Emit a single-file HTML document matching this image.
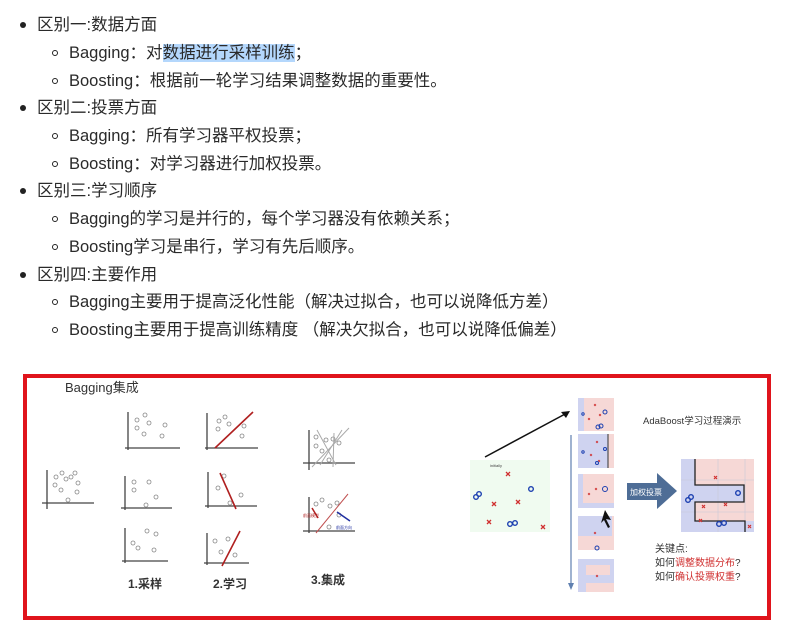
<!DOCTYPE html>
<html><head><meta charset="utf-8"><style>
html,body{margin:0;padding:0;background:#fff;width:790px;height:630px;overflow:hidden;position:relative}
.t{position:absolute;font-family:"Liberation Sans","Noto Sans CJK SC",sans-serif;font-size:16.5px;color:#2a2a2a;white-space:nowrap;line-height:20px}
.b1{position:absolute;width:6px;height:6px;border-radius:50%;background:#222}
.b2{position:absolute;border-radius:50%;border:1px solid #222;box-sizing:border-box;width:6px;height:6px}
.hl{background:#b4d7fc}
svg{position:absolute;left:0;top:0}
svg text{font-family:"Liberation Sans","Noto Sans CJK SC",sans-serif}
</style></head><body>
<div class="b1" style="left:20px;top:22px"></div><div class="t" style="left:37px;top:15px">区别一:数据方面</div>
<div class="b2" style="left:52px;top:50px"></div><div class="t" style="left:69px;top:43px">Bagging：对<span class="hl">数据进行采样训练</span>；</div>
<div class="b2" style="left:52px;top:78px"></div><div class="t" style="left:69px;top:71px">Boosting：根据前一轮学习结果调整数据的重要性。</div>
<div class="b1" style="left:20px;top:105px"></div><div class="t" style="left:37px;top:98px">区别二:投票方面</div>
<div class="b2" style="left:52px;top:133px"></div><div class="t" style="left:69px;top:126px">Bagging：所有学习器平权投票；</div>
<div class="b2" style="left:52px;top:161px"></div><div class="t" style="left:69px;top:154px">Boosting：对学习器进行加权投票。</div>
<div class="b1" style="left:20px;top:188px"></div><div class="t" style="left:37px;top:181px">区别三:学习顺序</div>
<div class="b2" style="left:52px;top:216px"></div><div class="t" style="left:69px;top:209px">Bagging的学习是并行的，每个学习器没有依赖关系；</div>
<div class="b2" style="left:52px;top:244px"></div><div class="t" style="left:69px;top:237px">Boosting学习是串行，学习有先后顺序。</div>
<div class="b1" style="left:20px;top:272px"></div><div class="t" style="left:37px;top:265px">区别四:主要作用</div>
<div class="b2" style="left:52px;top:299px"></div><div class="t" style="left:69px;top:292px">Bagging主要用于提高泛化性能（解决过拟合，也可以说降低方差）</div>
<div class="b2" style="left:52px;top:327px"></div><div class="t" style="left:69px;top:320px">Boosting主要用于提高训练精度 （解决欠拟合，也可以说降低偏差）</div>

<svg width="790" height="630" viewBox="0 0 790 630">
<rect x="25" y="376" width="744" height="242" fill="#fff" stroke="#e0141c" stroke-width="4"/>
<text x="65" y="392" font-size="13" fill="#333">Bagging集成</text>
<g stroke="#444" stroke-width="1.3" fill="none">
<path d="M47 470V509M42 503H94"/>
<path d="M128 412V450M125 448H180"/>
<path d="M125 476V510M121 508H172"/>
<path d="M125 528V563M122 561H168"/>
<path d="M207 413V450M205 448H258"/>
<path d="M208 472V508M205 506H257"/>
<path d="M207 533V565M204 563H249"/>
<path d="M309 430V470M303 463H355"/>
<path d="M309 497V533M303 531H355"/>
</g>
<g stroke="#888" stroke-width="0.8" fill="none">
<circle cx="56" cy="477" r="2"/><circle cx="62" cy="473" r="2"/><circle cx="66" cy="479" r="2"/><circle cx="71" cy="477" r="2"/><circle cx="75" cy="473" r="2"/><circle cx="55" cy="485" r="2"/><circle cx="61" cy="490" r="2"/><circle cx="78" cy="483" r="2"/><circle cx="77" cy="492" r="2"/><circle cx="68" cy="500" r="2"/>
<circle cx="137" cy="420" r="2"/><circle cx="145" cy="415" r="2"/><circle cx="149" cy="423" r="2"/><circle cx="137" cy="428" r="2"/><circle cx="165" cy="425" r="2"/><circle cx="144" cy="434" r="2"/><circle cx="162" cy="436" r="2"/>
<circle cx="134" cy="482" r="2"/><circle cx="149" cy="482" r="2"/><circle cx="134" cy="490" r="2"/><circle cx="156" cy="497" r="2"/><circle cx="146" cy="505" r="2"/>
<circle cx="133" cy="543" r="2"/><circle cx="147" cy="531" r="2"/><circle cx="156" cy="534" r="2"/><circle cx="138" cy="548" r="2"/><circle cx="154" cy="550" r="2"/>
<circle cx="219" cy="421" r="2"/><circle cx="225" cy="417" r="2"/><circle cx="229" cy="424" r="2"/><circle cx="218" cy="429" r="2"/><circle cx="244" cy="426" r="2"/><circle cx="242" cy="436" r="2"/>
<circle cx="218" cy="488" r="2"/><circle cx="224" cy="476" r="2"/><circle cx="241" cy="495" r="2"/><circle cx="230" cy="503" r="2"/>
<circle cx="215" cy="541" r="2"/><circle cx="221" cy="552" r="2"/><circle cx="228" cy="539" r="2"/><circle cx="235" cy="555" r="2"/>
<circle cx="316" cy="437" r="2"/><circle cx="316" cy="446" r="2"/><circle cx="322" cy="451" r="2"/><circle cx="326" cy="440" r="2"/><circle cx="333" cy="439" r="2"/><circle cx="339" cy="443" r="2"/><circle cx="329" cy="460" r="2"/>
<circle cx="316" cy="504" r="2"/><circle cx="322" cy="500" r="2"/><circle cx="330" cy="506" r="2"/><circle cx="337" cy="503" r="2"/><circle cx="339" cy="515" r="2"/><circle cx="329" cy="527" r="2"/>
</g>
<g stroke="#b02020" stroke-width="1.6"><path d="M215 448L253 412M220 473L236 509M222 566L240 531"/></g>
<path d="M316 533L348 494" stroke="#c05050" stroke-width="1"/>
<g stroke="#aaa" stroke-width="1"><path d="M317 430L336 465M312 467L349 428M320 465L342 430M334 433L333 467"/></g>
<path d="M318 518L312 508" stroke="#b02020" stroke-width="1.5"/><path d="M337 512L350 521" stroke="#2030a0" stroke-width="1.5"/>
<text x="303" y="517" font-size="4" fill="#b02020">前面模型</text><text x="336" y="529" font-size="4" fill="#2030a0">前面方向</text>
<text x="128" y="588" font-size="12" font-weight="bold" fill="#333">1.采样</text>
<text x="213" y="588" font-size="12" font-weight="bold" fill="#333">2.学习</text>
<text x="311" y="584" font-size="12" font-weight="bold" fill="#333">3.集成</text>

<rect x="470" y="460" width="80" height="72" fill="#f0fbf0"/>
<text x="490" y="467" font-size="4" fill="#444">initially</text>
<path d="M485 457L567 413" stroke="#111" stroke-width="1.5"/><path d="M570 411L561 412L566 418Z" fill="#111"/>
<g stroke="#d03030" stroke-width="1.3"><path d="M506 472l4 4m0-4l-4 4M492 502l4 4m0-4l-4 4M516 500l4 4m0-4l-4 4M487 520l4 4m0-4l-4 4M541 525l4 4m0-4l-4 4"/></g>
<g stroke="#1b3fb0" stroke-width="1.4" fill="none"><circle cx="476" cy="497" r="2.3"/><circle cx="479" cy="494" r="2.3"/><circle cx="531" cy="489" r="2.3"/><circle cx="510" cy="524" r="2.3"/><circle cx="515" cy="523" r="2.3"/></g>
<path d="M571 435V585" stroke="#6080b0" stroke-width="1.2"/><path d="M568 583L571 590L574 583Z" fill="#6080b0"/>
<g>
<rect x="578" y="398" width="36" height="33" fill="#f6d8d6"/><rect x="578" y="398" width="6" height="33" fill="#cfd3f0"/>
<rect x="578" y="434" width="36" height="34" fill="#cfd3f0"/><rect x="608" y="434" width="6" height="34" fill="#f6d8d6"/><path d="M608 434V468" stroke="#333"/>
<rect x="578" y="474" width="36" height="34" fill="#f6d8d6"/><rect x="578" y="474" width="5" height="34" fill="#cfd3f0"/><rect x="578" y="503" width="36" height="5" fill="#cfd3f0"/>
<rect x="578" y="516" width="36" height="34" fill="#f6d8d6"/><rect x="578" y="516" width="34" height="20" fill="#cfd3f0"/>
<rect x="578" y="559" width="36" height="33" fill="#cfd3f0"/><rect x="586" y="565" width="24" height="10" fill="#f6d8d6"/><rect x="586" y="583" width="28" height="9" fill="#f6d8d6"/>
</g>
<g stroke="#d03030" stroke-width="0.8"><path d="M594 404l2 2m0-2l-2 2M599 414l2 2m0-2l-2 2M588 418l2 2m0-2l-2 2M596 441l2 2m0-2l-2 2M590 454l2 2m0-2l-2 2M598 460l2 2m0-2l-2 2M595 488l2 2m0-2l-2 2M588 493l2 2m0-2l-2 2M594 532l2 2m0-2l-2 2M596 575l2 2m0-2l-2 2"/></g>
<g fill="none" stroke="#1b3fb0" stroke-width="1"><circle cx="605" cy="412" r="2"/><circle cx="598" cy="427" r="2"/><circle cx="601" cy="426" r="2"/><circle cx="605" cy="449" r="1.5"/><circle cx="597" cy="463" r="1.5"/><circle cx="605" cy="489" r="2.5"/><circle cx="597" cy="548" r="2"/><circle cx="583" cy="414" r="1.2"/><circle cx="583" cy="452" r="1.2"/></g>
<path d="M627 483H657V473L677 491L657 509V500H627Z" fill="#4e6d96"/>
<text x="630" y="495" font-size="8" fill="#fff">加权投票</text>
<path d="M605 510L611 520L606 519L610 527L608 528L604 520L601 523Z" fill="#111"/>
<rect x="681" y="459" width="73" height="73" fill="#f6d8d6"/>
<path d="M681 459H695V485H744V502H695V521H754V532H681Z" fill="#cfd3f0"/>
<g stroke="#c8c8d8" stroke-width="0.6"><path d="M681 480H754M681 512H754M718 459V532M745 459V532"/></g>
<path d="M695 459V485H744V502H695V521H745V532" fill="none" stroke="#222" stroke-width="1.3"/>
<g stroke="#d03030" stroke-width="1.2"><path d="M714 476l3 3m0-3l-3 3M702 505l3 3m0-3l-3 3M724 503l3 3m0-3l-3 3M699 519l3 3m0-3l-3 3M748 525l3 3m0-3l-3 3"/></g>
<g fill="none" stroke="#1b3fb0" stroke-width="1.4"><circle cx="688" cy="500" r="2.3"/><circle cx="691" cy="497" r="2.3"/><circle cx="738" cy="493" r="2.3"/><circle cx="719" cy="524" r="2.3"/><circle cx="724" cy="523" r="2.3"/></g>
<text x="643" y="424" font-size="9.5" fill="#333">AdaBoost学习过程演示</text>
<text x="655" y="552" font-size="10" fill="#333">关键点:</text>
<text x="655" y="566" font-size="10" fill="#333">如何<tspan fill="#d03030">调整数据分布</tspan>?</text>
<text x="655" y="580" font-size="10" fill="#333">如何<tspan fill="#d03030">确认投票权重</tspan>?</text>
</svg>
</body></html>
